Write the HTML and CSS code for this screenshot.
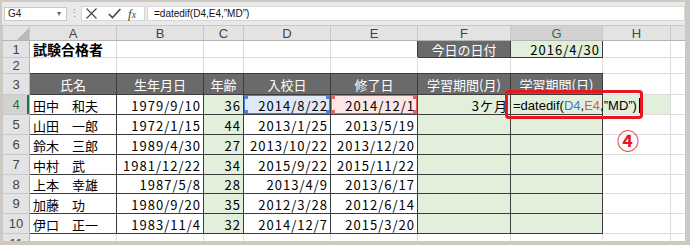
FILE: index.html
```html
<!DOCTYPE html>
<html lang="ja">
<head>
    <meta charset="UTF-8">
    <title>試験合格者</title>
    <link rel="stylesheet" href="styles.css">
</head>
<body>
<div class="app">
    <div class="fbar">
        <div class="namebox"><span>G4</span><span class="drop">▾</span></div>
        <div class="grip">⋮</div>
        <div class="fxbox">
            <svg class="i-x" width="11" height="11" viewBox="0 0 11 11"><path d="M0.5 0.5L10.5 10.5M10.5 0.5L0.5 10.5" stroke="#474747" stroke-width="1.2" fill="none"/></svg>
            <svg class="i-ok" width="13" height="11" viewBox="0 0 13 11"><path d="M0.8 6L4.5 9.6L12.4 1" stroke="#474747" stroke-width="1.6" fill="none"/></svg>
            <span class="fx">f<small>x</small></span>
        </div>
        <div class="finput">=datedif(D4,E4,”MD”)</div>
    </div>

    <div class="sheet">
        <table class="grid">
            <colgroup>
                <col class="c-rh"><col class="c-w"><col class="c-w"><col class="c-n"><col class="c-w">
                <col class="c-w"><col class="c-f"><col class="c-g"><col class="c-h"><col class="c-i">
            </colgroup>
            <tr class="ch">
                <td class="corner"><svg width="12" height="12" viewBox="0 0 12 12"><path d="M12 0V12H0Z" fill="#b9b9b9"/></svg></td>
                <td>A</td><td>B</td><td>C</td><td>D</td><td>E</td><td>F</td><td class="selc">G</td><td>H</td><td></td>
            </tr>
            <tr class="r1">
                <td class="rh">1</td>
                <td class="title">試験合格者</td><td></td><td></td><td></td><td class="brd"></td>
                <td class="hd">今日の日付</td><td class="t gr num">2016/4/30</td><td></td><td></td>
            </tr>
            <tr class="r2">
                <td class="rh">2</td>
                <td class="bb"></td><td class="bb"></td><td class="bb"></td><td class="bb"></td><td class="bb"></td>
                <td class="bb"></td><td class="bb"></td><td></td><td></td>
            </tr>
            <tr class="r3">
                <td class="rh">3</td>
                <td class="hd">氏名</td><td class="hd">生年月日</td><td class="hd">年齢</td><td class="hd">入校日</td>
                <td class="hd">修了日</td><td class="hd">学習期間(月)</td><td class="hd">学習期間(日)</td><td></td><td></td>
            </tr>
            <tr class="rd">
                <td class="rh sel">4</td>
                <td class="t">田中　和夫</td><td class="t num">1979/9/10</td><td class="t gr num">36</td>
                <td class="t num refd">2014/8/22</td><td class="t num refe">2014/12/1</td>
                <td class="t gr num">3ケ月</td>
                <td class="t gr fml">=datedif(<span class="cd">D4</span>,<span class="ce">E4</span>,”MD”)<span class="caret"></span></td>
                <td class="gr"></td><td></td>
            </tr>
            <tr class="rd">
                <td class="rh">5</td>
                <td class="t">山田　一郎</td><td class="t num">1972/1/15</td><td class="t gr num">44</td>
                <td class="t num">2013/1/25</td><td class="t num">2013/5/19</td>
                <td class="t gr"></td><td class="t gr"></td><td></td><td></td>
            </tr>
            <tr class="rd">
                <td class="rh">6</td>
                <td class="t">鈴木　三郎</td><td class="t num">1989/4/30</td><td class="t gr num">27</td>
                <td class="t num">2013/10/22</td><td class="t num">2013/12/20</td>
                <td class="t gr"></td><td class="t gr"></td><td></td><td></td>
            </tr>
            <tr class="rd">
                <td class="rh">7</td>
                <td class="t">中村　武</td><td class="t num">1981/12/22</td><td class="t gr num">34</td>
                <td class="t num">2015/9/22</td><td class="t num">2015/11/22</td>
                <td class="t gr"></td><td class="t gr"></td><td></td><td></td>
            </tr>
            <tr class="rd short">
                <td class="rh">8</td>
                <td class="t">上本　幸雄</td><td class="t num">1987/5/8</td><td class="t gr num">28</td>
                <td class="t num">2013/4/9</td><td class="t num">2013/6/17</td>
                <td class="t gr"></td><td class="t gr"></td><td></td><td></td>
            </tr>
            <tr class="rd">
                <td class="rh">9</td>
                <td class="t">加藤　功</td><td class="t num">1980/9/20</td><td class="t gr num">35</td>
                <td class="t num">2012/3/28</td><td class="t num">2012/6/14</td>
                <td class="t gr"></td><td class="t gr"></td><td></td><td></td>
            </tr>
            <tr class="rd">
                <td class="rh">10</td>
                <td class="t">伊口　正一</td><td class="t num">1983/11/4</td><td class="t gr num">32</td>
                <td class="t num">2014/12/7</td><td class="t num">2015/3/20</td>
                <td class="t gr"></td><td class="t gr"></td><td></td><td></td>
            </tr>
            <tr class="rd">
                <td class="rh">11</td>
                <td></td><td></td><td></td><td></td><td></td><td></td><td></td><td></td><td></td>
            </tr>
        </table>

        <div class="callout"></div>
        <div class="step">④</div>
    </div>
</div>
</body>
</html>
```

FILE: styles.css
```css
html, body {
    margin: 0;
}

body {
    width: 683px;
    height: 239px;
    padding: 2px 5px 4px 2px;
    background: #cdc8c0;
    overflow: hidden;
}

.app {
    height: 239px;
    background: #fff;
}

/* formula bar */
.fbar {
    display: flex;
    align-items: center;
    height: 23px;
    padding-left: 2px;
    background: #e9e9e9;
    font-family: "Liberation Sans", Arial, sans-serif;
}

.namebox {
    display: flex;
    justify-content: space-between;
    align-items: center;
    box-sizing: border-box;
    width: 63px;
    height: 14px;
    padding: 0 5px 0 3px;
    background: #fff;
    border: 1px solid #c9c9c9;
    font-size: 10px;
    color: #222;
}

.drop {
    font-size: 8px;
    color: #666;
}

.grip {
    width: 14px;
    text-align: center;
    font-size: 11px;
    color: #9a9a9a;
}

.fxbox {
    display: flex;
    align-items: center;
    box-sizing: border-box;
    width: 64px;
    height: 15px;
    padding-left: 4px;
    background: #fff;
    border: 1px solid #d6d6d6;
}

.i-ok {
    margin-left: 11px;
}

.fx {
    margin-left: 7px;
    font-family: "Liberation Serif", serif;
    font-style: italic;
    font-size: 13px;
    color: #444;
}

.fx small {
    font-size: 10px;
}

.finput {
    flex: 1;
    box-sizing: border-box;
    height: 15px;
    margin-left: 2px;
    padding-left: 6px;
    background: #fff;
    border: 1px solid #d6d6d6;
    font-size: 10px;
    line-height: 13px;
    color: #111;
}

/* sheet */
.sheet {
    position: relative;
    height: 216px;
    overflow: hidden;
}

.grid {
    border-collapse: collapse;
    table-layout: fixed;
    width: 683px;
    font-family: "Noto Sans CJK JP", sans-serif;
    font-size: 13px;
    color: #000;
}

.c-rh { width: 27px; }
.c-w { width: 87px; }
.c-n { width: 40px; }
.c-f { width: 93px; }
.c-g { width: 92px; }
.c-h { width: 68px; }
.c-i { width: 15px; }

.grid td {
    box-sizing: border-box;
    padding: 1px 3px 0;
    border: 1px solid #dcdcdc;
    line-height: 15px;
    white-space: nowrap;
    vertical-align: middle;
}

.ch td {
    height: 15px;
    padding: 0;
    background: #e3e3e3;
    border-color: #c8c8c8;
    border-bottom-color: #b4b4b4;
    text-align: center;
    font-family: "Liberation Sans", Arial, sans-serif;
    font-size: 13px;
    line-height: 13px;
    color: #444;
}

.ch .corner {
    text-align: right;
    vertical-align: bottom;
}

.ch .corner svg {
    display: block;
    margin-left: auto;
}

.ch .selc {
    background: #d2d2d2;
    color: #217346;
}

.r1 td { height: 17px; }
.r2 td { height: 16px; }
.r3 td { height: 21px; }
.rd td { height: 20px; }
.rd.short td { height: 19px; }

.grid .rh {
    padding: 0;
    background: #e3e3e3;
    border-color: #c8c8c8;
    border-right-color: #b4b4b4;
    text-align: center;
    font-family: "Liberation Sans", Arial, sans-serif;
    font-size: 13px;
    color: #444;
}

.grid .sel {
    background: #d2d2d2;
    color: #217346;
    box-shadow: inset -2px 0 0 #217346;
}

.title {
    font-size: 14px;
    font-weight: bold;
}

.grid .t {
    border-color: #3c3c3c;
}

.grid .hd {
    background: #6a6a6a;
    border-color: #3c3c3c;
    text-align: center;
    color: #fff;
}

.grid .bb {
    border-bottom-color: #3c3c3c;
}

.grid .brd {
    border-right-color: #3c3c3c;
}

.gr {
    background: #e2efda;
}

.grid .num {
    padding-right: 2px;
    text-align: right;
    letter-spacing: 1px;
}

/* references while editing G4 */
.refd {
    background:
        linear-gradient(#4a7fe0, #4a7fe0) left top / 4px 4px no-repeat,
        linear-gradient(#4a7fe0, #4a7fe0) right top / 4px 4px no-repeat,
        linear-gradient(#4a7fe0, #4a7fe0) left bottom / 4px 4px no-repeat,
        linear-gradient(#4a7fe0, #4a7fe0) right bottom / 4px 4px no-repeat,
        #dfe8f7;
    box-shadow: inset 0 0 0 1px #4a7fe0;
}

.refe {
    background:
        linear-gradient(#e46464, #e46464) left top / 4px 4px no-repeat,
        linear-gradient(#e46464, #e46464) right top / 4px 4px no-repeat,
        linear-gradient(#e46464, #e46464) left bottom / 4px 4px no-repeat,
        linear-gradient(#e46464, #e46464) right bottom / 4px 4px no-repeat,
        #fde6e6;
    box-shadow: inset 0 0 0 1px #e46464;
}

.grid .fml {
    padding-left: 2px;
    font-family: "Liberation Sans", Arial, sans-serif;
}

.cd { color: #3f75d8; }
.ce { color: #e05555; }

.caret {
    display: inline-block;
    width: 1px;
    height: 15px;
    margin-left: 2px;
    background: #000;
    vertical-align: -3px;
}

/* annotation */
.callout {
    position: absolute;
    left: 503px;
    top: 65px;
    box-sizing: border-box;
    width: 138px;
    height: 29px;
    border: 3px solid #e8161f;
    border-radius: 4px;
}

.step {
    position: absolute;
    left: 615px;
    top: 103px;
    font-family: "Noto Sans CJK JP", sans-serif;
    font-size: 22px;
    font-weight: bold;
    line-height: 22px;
    color: #e8161f;
}
```
